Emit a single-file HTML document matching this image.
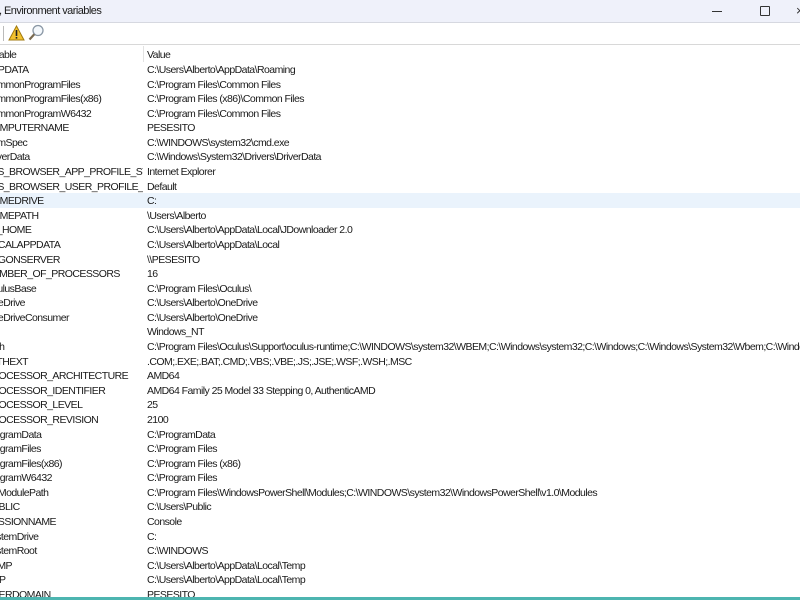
<!DOCTYPE html>
<html><head><style>
body{margin:0;width:800px;height:600px;overflow:hidden;background:#fff;font-family:"Liberation Sans",sans-serif;font-size:10.5px;letter-spacing:-0.55px;color:#1a1a1a;position:relative}
.title{position:absolute;left:0;top:0;width:800px;height:22px;background:#eff1fa;border-bottom:1px solid #d6d8e0}
.title span{position:absolute;left:-1px;top:5px;font-size:11px}
.tb{position:absolute;left:0;top:23px;width:800px;height:21px;border-bottom:1px solid #d8d8d8;background:#fff}
.hdr{position:absolute;top:46px;left:0;width:800px;height:16px}
.row{position:absolute;left:0;width:800px;height:14.6px;white-space:nowrap;overflow:hidden}
.a{position:absolute;left:-15px;top:2px;width:158px;overflow:hidden}
.b{position:absolute;left:147px;top:2px}
.sel{background:#eaf3fc}
.div{position:absolute;left:143px;top:46px;width:1px;height:16px;background:#e2e2e2}
</style></head><body>
<div class="title"><span>, Environment variables</span>
<div style="position:absolute;left:712px;top:11px;width:10px;height:1px;background:#333"></div>
<div style="position:absolute;left:760px;top:6px;width:8px;height:8px;border:1px solid #333;border-radius:1px"></div>
<div style="position:absolute;left:796px;top:3px;font-size:13px;color:#333">×</div>
</div>
<div class="tb">
<div style="position:absolute;left:3px;top:3px;width:1px;height:15px;background:#bbb"></div>
<svg style="position:absolute;left:8px;top:2px" width="17" height="16" viewBox="0 0 17 16"><path d="M8.5 1 L16 15 L1 15 Z" fill="#f2c12e" stroke="#a07a10" stroke-width="1"/><rect x="7.7" y="5" width="1.6" height="6" fill="#222"/><rect x="7.7" y="12" width="1.6" height="1.6" fill="#222"/></svg>
<svg style="position:absolute;left:28px;top:1px" width="17" height="17" viewBox="0 0 17 17"><circle cx="10" cy="6.5" r="5" fill="#f4f8fc" stroke="#8a97a5" stroke-width="1.3"/><path d="M6.3 10.2 L1.5 15.5" stroke="#7a6a50" stroke-width="2.2"/></svg>
</div>
<div class="hdr"><span class="a" style="left:-17px;top:3px">Variable</span><span class="b" style="top:3px">Value</span></div>
<div class="div"></div>
<div id="rows"></div>
<div style="position:absolute;left:0;top:597px;width:800px;height:3px;background:#4db5b0"></div>
<script>
var d=[["APPDATA","C:\\Users\\Alberto\\AppData\\Roaming"],["CommonProgramFiles","C:\\Program Files\\Common Files"],["CommonProgramFiles(x86)","C:\\Program Files (x86)\\Common Files"],["CommonProgramW6432","C:\\Program Files\\Common Files"],["COMPUTERNAME","PESESITO"],["ComSpec","C:\\WINDOWS\\system32\\cmd.exe"],["DriverData","C:\\Windows\\System32\\Drivers\\DriverData"],["FPS_BROWSER_APP_PROFILE_STRING","Internet Explorer"],["FPS_BROWSER_USER_PROFILE_STRING","Default"],["HOMEDRIVE","C:"],["HOMEPATH","\\Users\\Alberto"],["JD_HOME","C:\\Users\\Alberto\\AppData\\Local\\JDownloader 2.0"],["LOCALAPPDATA","C:\\Users\\Alberto\\AppData\\Local"],["LOGONSERVER","\\\\PESESITO"],["NUMBER_OF_PROCESSORS","16"],["OculusBase","C:\\Program Files\\Oculus\\"],["OneDrive","C:\\Users\\Alberto\\OneDrive"],["OneDriveConsumer","C:\\Users\\Alberto\\OneDrive"],["OS","Windows_NT"],["Path","C:\\Program Files\\Oculus\\Support\\oculus-runtime;C:\\WINDOWS\\system32\\WBEM;C:\\Windows\\system32;C:\\Windows;C:\\Windows\\System32\\Wbem;C:\\Windows\\..."],["PATHEXT",".COM;.EXE;.BAT;.CMD;.VBS;.VBE;.JS;.JSE;.WSF;.WSH;.MSC"],["PROCESSOR_ARCHITECTURE","AMD64"],["PROCESSOR_IDENTIFIER","AMD64 Family 25 Model 33 Stepping 0, AuthenticAMD"],["PROCESSOR_LEVEL","25"],["PROCESSOR_REVISION","2100"],["ProgramData","C:\\ProgramData"],["ProgramFiles","C:\\Program Files"],["ProgramFiles(x86)","C:\\Program Files (x86)"],["ProgramW6432","C:\\Program Files"],["PSModulePath","C:\\Program Files\\WindowsPowerShell\\Modules;C:\\WINDOWS\\system32\\WindowsPowerShell\\v1.0\\Modules"],["PUBLIC","C:\\Users\\Public"],["SESSIONNAME","Console"],["SystemDrive","C:"],["SystemRoot","C:\\WINDOWS"],["TEMP","C:\\Users\\Alberto\\AppData\\Local\\Temp"],["TMP","C:\\Users\\Alberto\\AppData\\Local\\Temp"],["USERDOMAIN","PESESITO"]];
var h="";
for(var i=0;i<d.length;i++){var t=62+i*14.58;h+='<div class="row'+(i==9?' sel':'')+'" style="top:'+t+'px"><span class="a">'+d[i][0]+'</span><span class="b">'+d[i][1]+'</span></div>';}
document.getElementById("rows").innerHTML=h;
</script>
</body></html>
